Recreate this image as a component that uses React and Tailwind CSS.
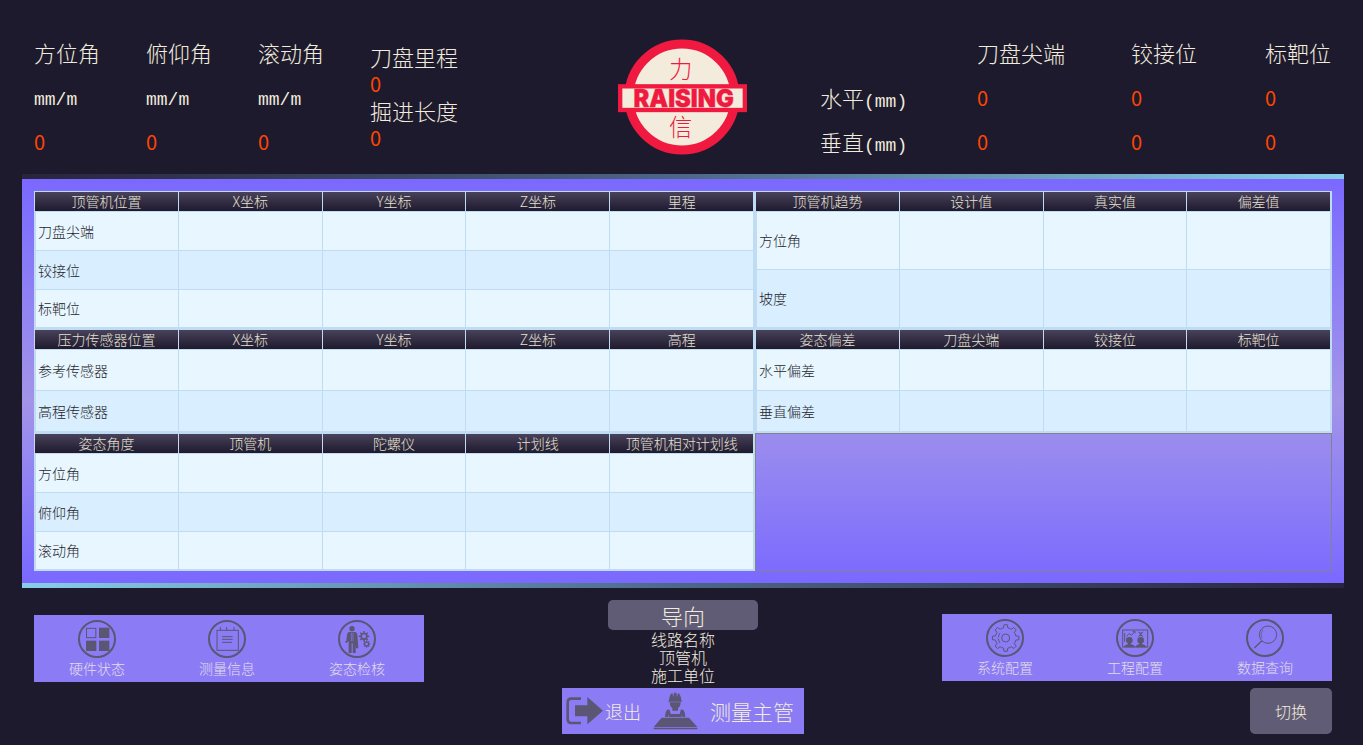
import React from "react";

const INK = "#5a5674";

function gearPath(cx, cy, outer, inner, teeth) {
  const step = (Math.PI * 2) / teeth;
  const at = (r, a) => `${(cx + r * Math.sin(a)).toFixed(1)} ${(cy - r * Math.cos(a)).toFixed(1)}`;
  let d = "";
  for (let i = 0; i < teeth; i++) {
    const a = i * step;
    d += `${i ? "L" : "M"}${at(inner, a - step * 0.27)} L${at(outer, a - step * 0.16)} L${at(outer, a + step * 0.16)} L${at(inner, a + step * 0.27)} `;
    d += `A${inner} ${inner} 0 0 1 ${at(inner, a + step * 0.73)} `;
  }
  return d + "Z";
}

function Ring({ children }) {
  return (
    <svg viewBox="0 0 114 114" className="size-[38px]" fill="none" stroke={INK} strokeWidth="3" aria-hidden="true">
      <circle cx="57" cy="57" r="54" strokeWidth="6" />
      {children}
    </svg>
  );
}

const HardwareIcon = () => (
  <Ring>
    <rect x="25.500" y="25" width="28" height="28" />
    <g fill={INK} stroke="none">
      <rect x="63" y="23" width="31" height="31" />
      <rect x="24" y="62" width="31" height="31" />
      <rect x="63" y="62" width="31" height="31" />
    </g>
  </Ring>
);

const NotesIcon = () => (
  <Ring>
    <rect x="27" y="31" width="64" height="60" />
    <path d="M37 21v10M56 21v10M78 21v10M42 50h32M42 58h32M42 67h30" />
  </Ring>
);

const InspectIcon = () => (
  <Ring>
    <g fill={INK} stroke="none">
      <circle cx="42" cy="26" r="8" />
      <path d="M32 36h20q6 1 6 9l3 40h-7l-1-10v24h-9V70h-3v29h-9V64l-8 6-3-5 4-2 2-18q1-8 5-9Z" />
      <path d={gearPath(78, 49, 16, 11, 8) + "M78 43a6 6 0 1 0 0 12a6 6 0 1 0 0-12Z"} fillRule="evenodd" />
      <path d={gearPath(86, 72, 11, 8, 8) + "M86 68a4 4 0 1 0 0 8a4 4 0 1 0 0-8Z"} fillRule="evenodd" />
    </g>
    <path d="M40 38v26M45 38v26" stroke="#8b7cf6" strokeWidth="2" />
  </Ring>
);

const SystemIcon = () => (
  <Ring>
    <path d={gearPath(59, 57, 40, 31, 8)} strokeLinejoin="round" />
    <circle cx="59" cy="57" r="12" />
    <path d="M42 42q-10 15 0 30" strokeDasharray="14 4" />
  </Ring>
);

const ProjectIcon = () => (
  <Ring>
    <rect x="20" y="33" width="75" height="51" />
    <path d="M26 42v26M32 52l8-9 6 6 10-11M50 37h7v6M67 38l14 15M81 38L67 53M70 42h9M70 50h9" />
    <g fill={INK} stroke="none">
      <circle cx="40" cy="64" r="10" />
      <circle cx="74" cy="64" r="10" />
      <path d="M36 70h8v6q11 1 13 9H24q2-8 12-9ZM70 70h8v6q11 1 13 9H58q2-8 12-9Z" />
    </g>
  </Ring>
);

const SearchIcon = () => (
  <Ring>
    <circle cx="66" cy="47" r="26" />
    <path d="M47 66L25 87" strokeWidth="4" />
    <path d="M48 58q-7-14 3-26" strokeWidth="2" />
  </Ring>
);

const ExitIcon = () => (
  <svg viewBox="0 0 111 84" className="h-[28px] w-[37px]" fill="none" aria-hidden="true">
    <path d="M45 5H16Q5 5 5 17V66Q5 78 16 78H45" stroke={INK} strokeWidth="8" />
    <path d="M27 25H64V0L111 41L64 82V58H27Z" fill={INK} />
  </svg>
);

const WorkerIcon = () => (
  <svg viewBox="0 0 135 114" className="h-[38px] w-[45px]" fill={INK} aria-hidden="true">
    <path d="M48 24Q50 6 58 3l3 12 2-13h7l2 13 3-12q8 3 10 21l2 5H46Z" />
    <path d="M50 31h33q0 12-8 17v8H58v-8q-8-5-8-17Z" />
    <path d="M41 55l8-3 4 14h27l4-14 8 3q5 8 5 20h-8l-3-8v8H47v-8l-3 8h-8q0-12 5-20Z" />
    <path d="M26 77H108L133 105H2Z" />
    <path d="M2 107H133V112H2Z" />
  </svg>
);

const Logo = () => (
  <svg viewBox="0 0 387 348" className="h-[116px] w-[129px]" role="img" aria-label="力信 RAISING">
    <circle cx="192" cy="174" r="159" fill="#f3ebdc" stroke="#f01a40" strokeWidth="27" />
    <rect x="6.500" y="142" width="374" height="71" fill="#f3ebdc" stroke="#f01a40" strokeWidth="13" />
    <g fill="#f01a40" textAnchor="middle">
      <text x="188" y="117" fontSize="70" fontWeight="300" fontFamily="Noto Sans CJK SC, sans-serif">力</text>
      <text x="188" y="290" fontSize="70" fontWeight="300" fontFamily="Noto Sans CJK SC, sans-serif">信</text>
      <text x="197" y="204" fontSize="71" fontWeight="900" fontFamily="Inter, sans-serif" stroke="#f01a40" strokeWidth="1">RAISING</text>
    </g>
  </svg>
);

function Angle({ name }) {
  return (
    <div className="w-28">
      <div className="text-[22px] leading-[40px]">{name}</div>
      <div className="font-['Liberation_Mono',monospace] text-[18px] leading-[56px]">mm/m</div>
      <div className="text-[20px] leading-[28px] font-normal text-[#ff4500]">0</div>
    </div>
  );
}

function OffsetTable() {
  return (
    <table className="table-fixed justify-self-end text-left text-[22px] leading-[44px]">
      <colgroup>
        <col className="w-[157px]" />
        <col className="w-[154px]" />
        <col className="w-[134px]" />
        <col className="w-[66px]" />
      </colgroup>
      <thead>
        <tr>
          <td />
          {["刀盘尖端", "铰接位", "标靶位"].map((h) => (
            <th key={h} scope="col" className="h-[45px] p-0 align-top font-light whitespace-nowrap">{h}</th>
          ))}
        </tr>
      </thead>
      <tbody>
        {["水平", "垂直"].map((name) => (
          <tr key={name}>
            <th scope="row" className="h-11 p-0 font-light whitespace-nowrap">
              <span className="flex h-11 items-baseline">
                {name}
                <span className="font-['Liberation_Mono',monospace] text-[18px] leading-[24px]">(mm)</span>
              </span>
            </th>
            {[0, 1, 2].map((i) => (
              <td key={i} className="px-0 pt-0.5 pb-0 text-[20px] leading-[42px] font-normal text-[#ff4500]">0</td>
            ))}
          </tr>
        ))}
      </tbody>
    </table>
  );
}

function DataTable({ heads, rows, rowClass }) {
  return (
    <table className="w-full table-fixed border-separate border-spacing-0 border border-[#bfdcf2] text-[14px] leading-[19px]">
      <thead>
        <tr>
          {heads.map((h) => (
            <th
              key={h}
              scope="col"
              className="h-5 border-r border-b border-[#bfdcf2] bg-linear-to-b from-[#48435a] to-[#201a2f] p-0 text-center font-light whitespace-nowrap text-[#e6e1d2]"
            >
              {h}
            </th>
          ))}
        </tr>
      </thead>
      <tbody>
        {rows.map((r) => (
          <tr key={r} className={`${rowClass} bg-[#e8f6ff] even:bg-[#d9eeff]`}>
            <th
              scope="row"
              className="border-x border-b border-[#bfdcf2] py-0 pr-0 pl-0.5 text-left font-light text-[#1f1f2b]"
            >
              {r}
            </th>
            {heads.slice(1).map((h) => (
              <td key={h} className="border-r border-b border-[#bfdcf2] p-0" />
            ))}
          </tr>
        ))}
      </tbody>
    </table>
  );
}

function ToolPanel({ items }) {
  return (
    <nav className="flex h-[67px] w-[390px] bg-[#8b7cf6]">
      {items.map(([label, Icon]) => (
        <button key={label} type="button" className="flex flex-1 flex-col items-center pt-[5px] pr-1 text-[14px] leading-[21px] text-[#e4dce8]">
          <Icon />
          {label}
        </button>
      ))}
    </nav>
  );
}

export default function App() {
  return (
    <div className="min-h-screen bg-[#1d1a2e] font-['Noto_Sans_CJK_SC',sans-serif] font-light text-[#f2ecdc]">
      <header className="grid h-[174px] grid-cols-[1fr_auto_1fr] pr-8 pl-[34px]">
        <div className="flex pt-8">
          <Angle name="方位角" />
          <Angle name="俯仰角" />
          <Angle name="滚动角" />
          <div className="pt-[11px] text-[22px] leading-[27px]">
            <div>刀盘里程</div>
            <div className="text-[20px] font-normal text-[#ff4500]">0</div>
            <div>掘进长度</div>
            <div className="text-[20px] font-normal text-[#ff4500]">0</div>
          </div>
        </div>
        <div className="pt-[39px]">
          <Logo />
        </div>
        <div className="grid content-start pt-[30px]">
          <OffsetTable />
        </div>
      </header>

      <main className="mr-[19px] ml-[22px]">
        <div className="h-[5px] bg-linear-to-r from-[#28243d] via-[#4c6887] to-[#87ceeb]" />
        <div className="grid grid-cols-[5fr_4fr] bg-linear-to-b from-[#7b68ff] via-[#a394e8] via-55% to-[#7b68ff] p-3">
          <DataTable heads={["顶管机位置", "X坐标", "Y坐标", "Z坐标", "里程"]} rows={["刀盘尖端", "铰接位", "标靶位"]} rowClass="h-[39px] last:h-[38px]" />
          <DataTable heads={["顶管机趋势", "设计值", "真实值", "偏差值"]} rows={["方位角", "坡度"]} rowClass="h-[58px]" />
          <DataTable heads={["压力传感器位置", "X坐标", "Y坐标", "Z坐标", "高程"]} rows={["参考传感器", "高程传感器"]} rowClass="h-[41px]" />
          <DataTable heads={["姿态偏差", "刀盘尖端", "铰接位", "标靶位"]} rows={["水平偏差", "垂直偏差"]} rowClass="h-[41px]" />
          <DataTable heads={["姿态角度", "顶管机", "陀螺仪", "计划线", "顶管机相对计划线"]} rows={["方位角", "俯仰角", "滚动角"]} rowClass="h-[39px] last:h-[38px]" />
          <div className="border border-[#7e8495]" />
        </div>
        <div className="h-[5px] bg-linear-to-r from-[#87ceeb] via-[#4c6887] to-[#28243d]" />
      </main>

      <footer className="grid grid-cols-[1fr_auto_1fr] pr-[31px] pl-[34px]">
        <div className="pt-[27px]">
          <ToolPanel items={[["硬件状态", HardwareIcon], ["测量信息", NotesIcon], ["姿态检核", InspectIcon]]} />
        </div>
        <div className="flex flex-col items-center pt-3">
          <button type="button" className="h-[30px] w-[150px] rounded-[5px] bg-[#605c75] text-[22px] leading-[28px]">导向</button>
          <div className="text-center text-[16px] leading-[18px]">
            <p>线路名称</p>
            <p>顶管机</p>
            <p>施工单位</p>
          </div>
          <div className="mt-1 flex h-[46px] w-[242px] items-center bg-[#8b7cf6] pl-1">
            <button type="button" className="flex items-center gap-0.5 text-[18px] leading-[46px]">
              <ExitIcon />
              退出
            </button>
            <button type="button" className="ml-3 flex items-center gap-3 text-[21px] leading-[46px]">
              <WorkerIcon />
              测量主管
            </button>
          </div>
        </div>
        <div className="flex flex-col items-end gap-[7px] pt-[26px]">
          <ToolPanel items={[["系统配置", SystemIcon], ["工程配置", ProjectIcon], ["数据查询", SearchIcon]]} />
          <button type="button" className="h-[46px] w-[82px] rounded-[5px] bg-[#605c75] text-[16px]">切换</button>
        </div>
      </footer>
    </div>
  );
}
